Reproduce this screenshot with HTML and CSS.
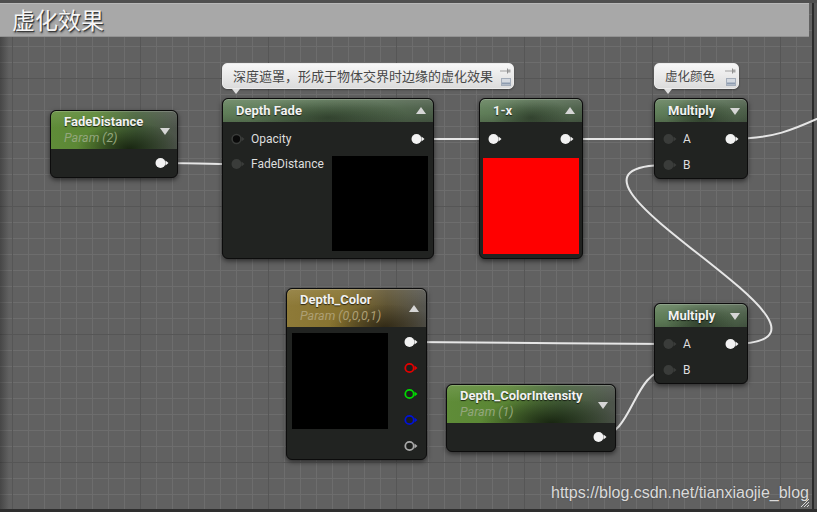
FILE: index.html
```html
<!DOCTYPE html>
<html lang="zh">
<head>
<meta charset="utf-8">
<title>虚化效果</title>
<link rel="stylesheet" href="styles.css">
</head>
<body>
<div class="canvas">
  <header class="comment-title">虚化效果</header>

  <svg class="wires" viewBox="0 0 817 512" width="817" height="512">
    <path d="M160 163 C 190 163, 207 164, 237 164"/>
    <path d="M416 139 L 493 139"/>
    <path d="M565 139 L 668 139"/>
    <path d="M730 139 C 772 139, 792 131, 832 112"/>
    <path d="M730 344 C 895 344, 503 165, 668 165"/>
    <path d="M409 342 C 500 342, 580 344, 668 344"/>
    <path d="M598 437 C 633 437, 633 370, 668 370"/>
  </svg>

  <div class="bubble bubble-fade">
    <span class="bubble-text">深度遮罩，形成于物体交界时边缘的虚化效果</span>
    <span class="bubble-icons">
      <svg class="ico-pin" viewBox="0 0 11 6" width="11" height="6"><path d="M0 3H7" stroke="#a0a0a0" stroke-width="1"/><path d="M7.5 0.5V5.5" stroke="#909090" stroke-width="1"/><rect x="8" y="1.5" width="2.5" height="3" fill="#a6a6a6"/></svg>
      <svg class="ico-box" viewBox="0 0 10 8" width="10" height="8"><rect x="0.5" y="0.5" width="9" height="7" fill="#d4d9e0" stroke="#a4adba"/><path d="M1 5.5H9" stroke="#8e9cb0" stroke-width="2"/></svg>
    </span>
  </div>

  <div class="bubble bubble-color">
    <span class="bubble-text">虚化颜色</span>
    <span class="bubble-icons">
      <svg class="ico-pin" viewBox="0 0 11 6" width="11" height="6"><path d="M0 3H7" stroke="#a0a0a0" stroke-width="1"/><path d="M7.5 0.5V5.5" stroke="#909090" stroke-width="1"/><rect x="8" y="1.5" width="2.5" height="3" fill="#a6a6a6"/></svg>
      <svg class="ico-box" viewBox="0 0 10 8" width="10" height="8"><rect x="0.5" y="0.5" width="9" height="7" fill="#d4d9e0" stroke="#a4adba"/><path d="M1 5.5H9" stroke="#8e9cb0" stroke-width="2"/></svg>
    </span>
  </div>

  <!-- FadeDistance -->
  <div class="node n-fadedist">
    <div class="head param green">
      <div class="head-text">
        <div class="title">FadeDistance</div>
        <div class="sub green-sub">Param (2)</div>
      </div>
      <span class="tri down"></span>
    </div>
    <div class="body">
      <div class="row out-row">
        <svg class="pin out" viewBox="0 0 14 12" width="14" height="12"><circle cx="5.5" cy="6" r="5"/><path d="M10.5 3.5L13.5 6L10.5 8.5Z"/></svg>
      </div>
    </div>
  </div>

  <!-- Depth Fade -->
  <div class="node n-depthfade">
    <div class="head fn">
      <span class="title">Depth Fade</span>
      <span class="tri up"></span>
    </div>
    <div class="body fn-body">
      <div class="row split">
        <span class="in-pin">
          <svg class="pin ring-dark" viewBox="0 0 14 12" width="14" height="12"><circle cx="5.5" cy="6" r="4.4"/><path d="M10.5 3.5L13.5 6L10.5 8.5Z"/></svg>
          <span class="label">Opacity</span>
        </span>
        <svg class="pin out" viewBox="0 0 14 12" width="14" height="12"><circle cx="5.5" cy="6" r="5"/><path d="M10.5 3.5L13.5 6L10.5 8.5Z"/></svg>
      </div>
      <div class="df-lower">
        <div class="row short">
          <span class="in-pin">
            <svg class="pin in" viewBox="0 0 14 12" width="14" height="12"><circle cx="5.5" cy="6" r="5"/><path d="M10.5 3.5L13.5 6L10.5 8.5Z"/></svg>
            <span class="label">FadeDistance</span>
          </span>
        </div>
        <div class="preview black df-preview"></div>
      </div>
    </div>
  </div>

  <!-- 1-x -->
  <div class="node n-onex">
    <div class="head fn">
      <span class="title">1-x</span>
      <span class="tri up"></span>
    </div>
    <div class="body fn-body">
      <div class="row split">
        <svg class="pin out" viewBox="0 0 14 12" width="14" height="12"><circle cx="5.5" cy="6" r="5"/><path d="M10.5 3.5L13.5 6L10.5 8.5Z"/></svg>
        <svg class="pin out" viewBox="0 0 14 12" width="14" height="12"><circle cx="5.5" cy="6" r="5"/><path d="M10.5 3.5L13.5 6L10.5 8.5Z"/></svg>
      </div>
      <div class="preview red onex-preview"></div>
    </div>
  </div>

  <!-- Multiply (top) -->
  <div class="node n-mul n-mul-top">
    <div class="head fn">
      <span class="title">Multiply</span>
      <span class="tri down"></span>
    </div>
    <div class="body fn-body">
      <div class="row split">
        <span class="in-pin">
          <svg class="pin in" viewBox="0 0 14 12" width="14" height="12"><circle cx="5.5" cy="6" r="5"/><path d="M10.5 3.5L13.5 6L10.5 8.5Z"/></svg>
          <span class="label">A</span>
        </span>
        <svg class="pin out" viewBox="0 0 14 12" width="14" height="12"><circle cx="5.5" cy="6" r="5"/><path d="M10.5 3.5L13.5 6L10.5 8.5Z"/></svg>
      </div>
      <div class="row">
        <span class="in-pin">
          <svg class="pin in" viewBox="0 0 14 12" width="14" height="12"><circle cx="5.5" cy="6" r="5"/><path d="M10.5 3.5L13.5 6L10.5 8.5Z"/></svg>
          <span class="label">B</span>
        </span>
      </div>
    </div>
  </div>

  <!-- Depth_Color -->
  <div class="node n-depthcolor">
    <div class="head param gold">
      <div class="head-text">
        <div class="title">Depth_Color</div>
        <div class="sub gold-sub">Param (0,0,0,1)</div>
      </div>
      <span class="tri up"></span>
    </div>
    <div class="body dc-body">
      <div class="preview black dc-preview"></div>
      <div class="pin-col">
        <div class="row out-row"><svg class="pin out" viewBox="0 0 14 12" width="14" height="12"><circle cx="5.5" cy="6" r="5"/><path d="M10.5 3.5L13.5 6L10.5 8.5Z"/></svg></div>
        <div class="row out-row"><svg class="pin ring r" viewBox="0 0 14 12" width="14" height="12"><circle cx="5.5" cy="6" r="4.2"/><path d="M10.5 3.5L13.5 6L10.5 8.5Z"/></svg></div>
        <div class="row out-row"><svg class="pin ring g" viewBox="0 0 14 12" width="14" height="12"><circle cx="5.5" cy="6" r="4.2"/><path d="M10.5 3.5L13.5 6L10.5 8.5Z"/></svg></div>
        <div class="row out-row"><svg class="pin ring b" viewBox="0 0 14 12" width="14" height="12"><circle cx="5.5" cy="6" r="4.2"/><path d="M10.5 3.5L13.5 6L10.5 8.5Z"/></svg></div>
        <div class="row out-row"><svg class="pin ring a" viewBox="0 0 14 12" width="14" height="12"><circle cx="5.5" cy="6" r="4.2"/><path d="M10.5 3.5L13.5 6L10.5 8.5Z"/></svg></div>
      </div>
    </div>
  </div>

  <!-- Multiply (bottom) -->
  <div class="node n-mul n-mul-bottom">
    <div class="head fn">
      <span class="title">Multiply</span>
      <span class="tri down"></span>
    </div>
    <div class="body fn-body">
      <div class="row split">
        <span class="in-pin">
          <svg class="pin in" viewBox="0 0 14 12" width="14" height="12"><circle cx="5.5" cy="6" r="5"/><path d="M10.5 3.5L13.5 6L10.5 8.5Z"/></svg>
          <span class="label">A</span>
        </span>
        <svg class="pin out" viewBox="0 0 14 12" width="14" height="12"><circle cx="5.5" cy="6" r="5"/><path d="M10.5 3.5L13.5 6L10.5 8.5Z"/></svg>
      </div>
      <div class="row">
        <span class="in-pin">
          <svg class="pin in" viewBox="0 0 14 12" width="14" height="12"><circle cx="5.5" cy="6" r="5"/><path d="M10.5 3.5L13.5 6L10.5 8.5Z"/></svg>
          <span class="label">B</span>
        </span>
      </div>
    </div>
  </div>

  <!-- Depth_ColorIntensity -->
  <div class="node n-intensity">
    <div class="head param green">
      <div class="head-text">
        <div class="title">Depth_ColorIntensity</div>
        <div class="sub green-sub">Param (1)</div>
      </div>
      <span class="tri down"></span>
    </div>
    <div class="body">
      <div class="row out-row">
        <svg class="pin out" viewBox="0 0 14 12" width="14" height="12"><circle cx="5.5" cy="6" r="5"/><path d="M10.5 3.5L13.5 6L10.5 8.5Z"/></svg>
      </div>
    </div>
  </div>

  <div class="watermark">https://blog.csdn.net/tianxiaojie_blog</div>
  <svg class="resize" viewBox="0 0 10 10" width="10" height="10">
    <path d="M1 9L9 1M4 9L9 4M7 9L9 7" stroke="#d8d8d8" stroke-width="1"/>
  </svg>
</div>
</body>
</html>
```

FILE: styles.css
```css
* { box-sizing: border-box; }

html, body {
  margin: 0;
  padding: 0;
}

body {
  width: 817px;
  height: 512px;
  overflow: hidden;
  background: #616161;
  font-family: Roboto, "Noto Sans", sans-serif;
}

.canvas {
  position: relative;
  width: 817px;
  height: 512px;
  padding-top: 3px;
  background-color: #616161;
  background-image:
    linear-gradient(180deg, #4f4f4f 3px, rgba(0,0,0,0) 3px),
    linear-gradient(0deg, #2e2e2e 3px, rgba(0,0,0,0) 3px),
    linear-gradient(270deg, #585858 3px, #2b2b2b 3px, #2b2b2b 5px, rgba(0,0,0,0) 5px),
    linear-gradient(90deg, rgba(0,0,0,.28), rgba(0,0,0,0) 9px),
    linear-gradient(90deg, #565656 1px, rgba(0,0,0,0) 1px),
    linear-gradient(180deg, #565656 1px, rgba(0,0,0,0) 1px),
    linear-gradient(90deg, #6d6d6d 1px, rgba(0,0,0,0) 1px),
    linear-gradient(180deg, #6d6d6d 1px, rgba(0,0,0,0) 1px);
  background-size:
    100% 100%,
    100% 100%,
    100% 100%,
    100% 100%,
    128px 128px,
    128px 128px,
    16px 16px,
    16px 16px;
  background-position:
    0 0,
    0 0,
    0 0,
    0 0,
    12px 0,
    0 78px,
    12px 0,
    0 14px;
}

.comment-title {
  height: 34px;
  margin-right: 8px;
  padding-left: 12px;
  background: #a8a8a8;
  border-top: 1px solid #b8b8b8;
  border-bottom: 1px solid #929292;
  color: #f6f6f6;
  font: 400 23px/31px "Noto Sans CJK SC", sans-serif;
  text-shadow: 1px 1px 0 #3c3c3c, 1px 2px 2px rgba(0,0,0,.45);
}

.wires {
  position: absolute;
  left: 0;
  top: 0;
}

.wires path {
  fill: none;
  stroke: #e6e6e6;
  stroke-width: 2;
}

/* comment bubbles */
.bubble {
  position: absolute;
  top: 63px;
  height: 26px;
  display: flex;
  align-items: stretch;
  padding-left: 10px;
  border-radius: 5px;
  border: 1px solid #ececec;
  background: linear-gradient(180deg, #f7f7f7, #dcdcdc);
  box-shadow: 0 1px 2px rgba(0,0,0,.35);
  color: #484848;
  font: 400 13px/24px "Noto Sans CJK SC", sans-serif;
}

.bubble::after {
  content: "";
  position: absolute;
  left: 9px;
  bottom: -6px;
  border-left: 4px solid transparent;
  border-right: 4px solid transparent;
  border-top: 5px solid #dedede;
}

.bubble-fade { left: 222px; width: 292px; }
.bubble-color { left: 654px; width: 85px; font-size: 12.5px; }

.bubble-text { white-space: nowrap; }

.bubble-icons {
  margin-left: auto;
  padding: 4px 2px 0 0;
  display: flex;
  flex-direction: column;
  align-items: flex-end;
  gap: 4px;
}

/* nodes */
.node {
  position: absolute;
  display: flex;
  flex-direction: column;
  border: 1px solid #0c0c0c;
  border-radius: 6px;
  background: #212321;
  box-shadow: 0 2px 5px rgba(0,0,0,.55);
  overflow: hidden;
}

.head {
  display: flex;
  align-items: center;
  justify-content: space-between;
  padding: 0 7px 0 13px;
  border-radius: 5px 5px 0 0;
  box-shadow: inset 0 1px 0 rgba(255,255,255,.18);
}

.head.fn {
  height: 23px;
  background:
    linear-gradient(180deg, rgba(255,255,255,.14) 0, rgba(255,255,255,.03) 40%, rgba(0,0,0,0) 60%, rgba(0,0,0,.14) 100%),
    radial-gradient(ellipse 38% 90% at 50% 80%, rgba(28,38,26,.55), rgba(28,38,26,0) 100%),
    linear-gradient(90deg, #617f5a 0%, #587452 45%, #4b5d48 100%);
}

.head.param { height: 38px; }

.head.param.green {
  background:
    radial-gradient(ellipse 42% 70% at 62% 100%, rgba(16,26,10,.85), rgba(16,26,10,0) 100%),
    linear-gradient(180deg, rgba(255,255,255,.1), rgba(255,255,255,0) 45%),
    linear-gradient(90deg, #5f8c38 0%, #5a8534 35%, #45603a 68%, #4d534b 100%);
}

.head.param.gold {
  background:
    radial-gradient(ellipse 40% 60% at 70% 100%, rgba(30,24,10,.7), rgba(30,24,10,0) 100%),
    linear-gradient(180deg, rgba(255,255,255,.1), rgba(255,255,255,0) 45%),
    linear-gradient(90deg, #8e7a38 0%, #86722f 40%, #5f5434 72%, #555550 100%);
}

.head-text { display: flex; flex-direction: column; }

.title {
  color: #f2f2f2;
  font-weight: 700;
  font-size: 13px;
  line-height: 16px;
  white-space: nowrap;
  text-shadow: 0 1px 1px rgba(0,0,0,.7);
}

.sub {
  font-style: italic;
  font-size: 12.5px;
  line-height: 16px;
  white-space: nowrap;
}

.green-sub { color: #93a67d; }
.gold-sub { color: #ad9f74; }

.tri {
  width: 0;
  height: 0;
  border-left: 5.5px solid transparent;
  border-right: 5.5px solid transparent;
}

.tri.down { border-top: 7px solid #d6d6d6; margin-top: 2px; }
.tri.up { border-bottom: 7px solid #d6d6d6; }

.body { display: flex; flex-direction: column; }

.fn-body { padding-top: 4px; }

.row {
  height: 26px;
  display: flex;
  align-items: center;
  padding: 0 8px;
}

.row.split { justify-content: space-between; }

.row.out-row {
  height: 28px;
  justify-content: flex-end;
}

.in-pin {
  display: flex;
  align-items: center;
  gap: 6px;
}

.label {
  color: #dedede;
  font-size: 12px;
  line-height: 14px;
  white-space: nowrap;
}

.pin { display: block; flex: none; }
.pin.out circle, .pin.out path { fill: #f2f2f2; }
.pin.in circle, .pin.in path { fill: #3a3c3a; }
.pin.ring-dark circle { fill: #0a0a0a; stroke: #3a3c3a; stroke-width: 1.5; }
.pin.ring-dark path { fill: #3a3c3a; }
.pin.ring circle { fill: #1d1f1d; stroke-width: 1.8; }
.pin.ring.r circle { stroke: #e30000; }
.pin.ring.r path { fill: #e30000; }
.pin.ring.g circle { stroke: #00d800; }
.pin.ring.g path { fill: #00d800; }
.pin.ring.b circle { stroke: #0012d8; }
.pin.ring.b path { fill: #0012d8; }
.pin.ring.a circle { stroke: #a8a8a8; }
.pin.ring.a path { fill: #a8a8a8; }

.preview.black { background: #000; }
.preview.red { background: #ff0000; }

/* node placement on the graph canvas */
.n-fadedist { left: 50px; top: 110px; width: 128px; height: 68px; }

.n-depthfade { left: 222px; top: 98px; width: 212px; height: 161px; }
.df-lower { display: flex; justify-content: space-between; }
.df-lower .row { height: 24px; }
.df-preview { width: 96px; height: 95px; margin: 4px 5px 0 0; }

.n-onex { left: 479px; top: 98px; width: 104px; height: 161px; }
.onex-preview { width: 96px; height: 96px; margin: 6px 0 0 3px; }

.n-mul { width: 94px; height: 81px; left: 654px; }
.n-mul-top { top: 98px; }
.n-mul-bottom { top: 303px; }

.n-depthcolor { left: 286px; top: 288px; width: 141px; height: 172px; }
.dc-body { flex-direction: row; }
.dc-preview { width: 96px; height: 96px; margin: 6px 0 0 5px; }
.pin-col { margin-left: auto; padding-top: 2px; }
.pin-col .row.out-row { height: 26px; }

.n-intensity { left: 446px; top: 384px; width: 170px; height: 68px; }

.watermark {
  position: absolute;
  left: 551px;
  top: 483px;
  color: #dadada;
  font: 400 16px/20px "Liberation Sans", Arial, sans-serif;
  text-shadow: 0 0 2px rgba(0,0,0,.25);
  white-space: nowrap;
}

.resize {
  position: absolute;
  left: 800px;
  top: 498px;
}
```
